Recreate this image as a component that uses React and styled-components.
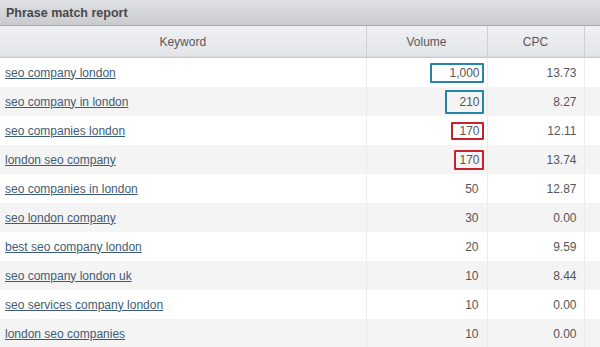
import React from "react";
import styled, { createGlobalStyle } from "styled-components";

const Global = createGlobalStyle`
  html, body { margin: 0; padding: 0; background: #fff; }
  body { font-family: "Liberation Sans", Arial, sans-serif; }
`;

const Panel = styled.div`
  width: 600px;
  height: 347px;
  overflow: hidden;
  background: #fff;
`;

const TitleBar = styled.div`
  height: 25px;
  display: flex;
  align-items: center;
  padding-left: 6px;
  background: linear-gradient(#dfe0e3, #c9cbce);
  border-bottom: 1px solid #a9abae;
  font-size: 12.5px;
  font-weight: bold;
  color: #48494c;
`;

const Table = styled.table`
  width: 600px;
  border-collapse: collapse;
  table-layout: fixed;
  font-size: 12px;
`;

const HeadCell = styled.th`
  height: 31px;
  padding: 0;
  font-weight: normal;
  color: #58595c;
  text-align: center;
  background: linear-gradient(#eff0f3, #e2e4e7);
  border-right: 1px solid #cfd1d4;
  border-bottom: 1px solid #c6c8cb;
  box-shadow: inset 0 -1px 0 #d8dadd;
  &:last-child { border-right: none; }
`;

const Row = styled.tr`
  background: ${(p) => (p.$odd ? "#f4f4f4" : "#ffffff")};
`;

const Cell = styled.td`
  height: 29px;
  padding: 0 ${(p) => p.$pad || 0}px 0 ${(p) => (p.$left ? 5 : 0)}px;
  text-align: ${(p) => (p.$left ? "left" : "right")};
  color: #555659;
  border-right: 1px solid #ececec;
  &:last-child { border-right: none; }
`;

const KeywordLink = styled.a`
  color: #3f5b73;
  text-decoration: underline;
  cursor: pointer;
`;

const Mark = styled.span`
  display: inline-block;
  border: 2px solid ${(p) => (p.$tone === "red" ? "#c8222c" : "#2784a6")};
  border-radius: 1px;
  padding: ${(p) => p.$v}px 2px ${(p) => p.$v}px ${(p) => p.$l}px;
  margin-right: -5px;
  line-height: 14px;
`;

const rows = [
  ["seo company london", "1,000", "13.73", { tone: "blue", l: 17, v: 1 }],
  ["seo company in london", "210", "8.27", { tone: "blue", l: 12, v: 3 }],
  ["seo companies london", "170", "12.11", { tone: "red", l: 6, v: 0 }],
  ["london seo company", "170", "13.74", { tone: "red", l: 3, v: 1 }],
  ["seo companies in london", "50", "12.87"],
  ["seo london company", "30", "0.00"],
  ["best seo company london", "20", "9.59"],
  ["seo company london uk", "10", "8.44"],
  ["seo services company london", "10", "0.00"],
  ["london seo companies", "10", "0.00"],
];

export default function App() {
  return (
    <Panel>
      <Global />
      <TitleBar>Phrase match report</TitleBar>
      <Table>
        <colgroup>
          <col style={{ width: 366 }} />
          <col style={{ width: 121 }} />
          <col style={{ width: 97 }} />
          <col style={{ width: 16 }} />
        </colgroup>
        <thead>
          <tr>
            <HeadCell>Keyword</HeadCell>
            <HeadCell>Volume</HeadCell>
            <HeadCell>CPC</HeadCell>
            <HeadCell />
          </tr>
        </thead>
        <tbody>
          {rows.map(([kw, vol, cpc, mark], i) => (
            <Row key={kw} $odd={i % 2 === 1}>
              <Cell $left>
                <KeywordLink>{kw}</KeywordLink>
              </Cell>
              <Cell $pad={8}>
                {mark ? (
                  <Mark $tone={mark.tone} $l={mark.l} $v={mark.v}>
                    {vol}
                  </Mark>
                ) : (
                  vol
                )}
              </Cell>
              <Cell $pad={7}>{cpc}</Cell>
              <Cell />
            </Row>
          ))}
        </tbody>
      </Table>
    </Panel>
  );
}
